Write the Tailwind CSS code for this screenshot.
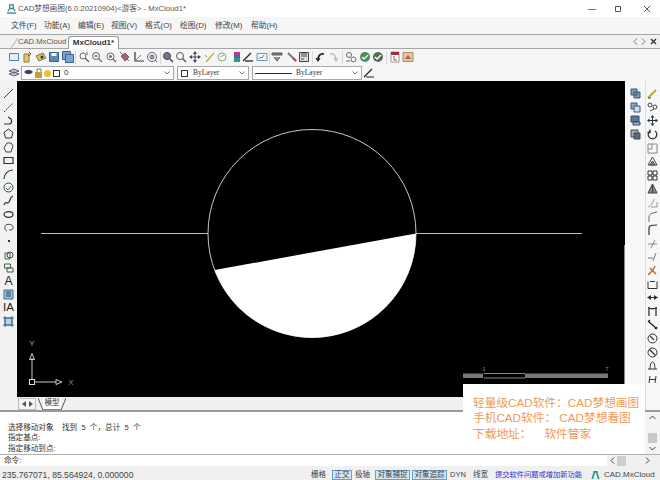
<!doctype html>
<html>
<head>
  <meta charset="UTF-8">
  <script src="https://cdn.jsdelivr.net/npm/@tailwindcss/browser@4"></script>
</head>
<body class="m-0">
<div class="relative w-[660px] h-[480px] overflow-hidden flex flex-col bg-[#f0f0f0] text-[#333] text-[8px] leading-none font-['Liberation_Sans','Noto_Sans_CJK_SC',sans-serif]">

  <!-- Title bar -->
  <div class="h-[17px] bg-white flex items-center shrink-0">
    <svg class="w-[11px] h-[11px] ml-[6px]" viewBox="0 0 12 12" fill="none"><path d="M4 2h4v4H4zM2 9l2-3h4l2 3" stroke="#2f8f7f" stroke-width="1.4"/><path d="M1 11h10" stroke="#3a6fb0" stroke-width="1.4"/></svg>
    <span class="ml-[1px] text-[7.7px] text-[#555]">CAD梦想画图(6.0.20210904)&lt;游客&gt; - MxCloud1*</span>
    <div class="ml-auto flex items-center">
      <svg class="w-[8px] h-[8px]" viewBox="0 0 8 8"><path d="M0 4.500h8" stroke="#777"/></svg>
      <svg class="w-[8px] h-[8px] ml-[18px]" viewBox="0 0 8 8" fill="none"><path d="M1.500 1.500h5v5h-5z" stroke="#555"/></svg>
      <svg class="w-[8px] h-[8px] ml-[21px] mr-[9px]" viewBox="0 0 8 8" fill="none"><path d="M1 1l6 6M7 1l-6 6" stroke="#555"/></svg>
    </div>
  </div>

  <!-- Menu bar -->
  <div class="h-[17px] bg-[#f6f6f6] flex items-center shrink-0 text-[7.8px] text-[#444]">
    <span class="ml-[11px] w-[33px]">文件(F)</span>
    <span class="w-[34px]">功能(A)</span>
    <span class="w-[33px]">编辑(E)</span>
    <span class="w-[34px]">视图(V)</span>
    <span class="w-[35px]">格式(O)</span>
    <span class="w-[35px]">绘图(D)</span>
    <span class="w-[36px]">修改(M)</span>
    <span>帮助(H)</span>
  </div>

  <!-- Document tabs -->
  <div class="h-[15px] bg-[#f1f1f1] border-t border-b border-[#a6a6a6] flex items-end shrink-0 relative">
    <svg class="w-[7px] h-[12px] ml-[11px]" viewBox="0 0 7 12" fill="none"><path d="M0 12L7 2" stroke="#aaa"/></svg>
    <span class="w-[50px] h-[13px] flex items-center text-[#555] text-[7.6px] whitespace-nowrap">CAD.MxCloud</span>
    <div class="h-[13px] w-[51px] bg-white border border-b-0 border-[#999] rounded-t-[3px] flex items-center justify-center font-bold text-[#333] text-[8px] -mb-[1px]">MxCloud1*</div>
    <div class="ml-auto h-[13px] flex items-center gap-[3px] mr-[3px]">
      <svg class="w-[5px] h-[7px]" viewBox="0 0 5 7" fill="none"><path d="M4 .5L1 3.500l3 3" stroke="#777"/></svg>
      <svg class="w-[5px] h-[7px]" viewBox="0 0 5 7" fill="none"><path d="M1 .5l3 3-3 3" stroke="#777"/></svg>
      <svg class="w-[7px] h-[7px] ml-[1px]" viewBox="0 0 7 7" fill="none"><path d="M1 1l5 5M6 1L1 6" stroke="#333" stroke-width="1.3"/></svg>
    </div>
  </div>

  <!-- Standard toolbar -->
  <div class="h-[16px] bg-[#f5f5f5] flex items-center shrink-0 pl-[8px]">
    <svg class="w-[12px] h-[12px] shrink-0" viewBox="0 0 12 12" fill="#e3eef8" stroke="#4a7fb0"><path d="M1.500 2.500h9v7h-9z"/></svg>
    <svg class="w-[12px] h-[12px] shrink-0 ml-[1px]" viewBox="0 0 12 12" fill="#e8c860" stroke="#8a7a40"><path d="M3 3h5v8H3z"/><path d="M8 1l2 2-3 2" fill="none" stroke="#555"/></svg>
    <svg class="w-[12px] h-[12px] shrink-0 ml-[2px]" viewBox="0 0 12 12" fill="#e5c050" stroke="#777"><path d="M1 5l7-3 3 5-7 3z"/><circle cx="7" cy="6" r="1.500" fill="#333" stroke="none"/></svg>
    <svg class="w-[12px] h-[12px] shrink-0 ml-[1px]" viewBox="0 0 12 12" fill="#5b86bd" stroke="#3c5f8c"><path d="M1.500 1.500h9v9h-9z"/><path d="M3.500 2h5v3h-5z" fill="#fff" stroke="none"/></svg>
    <svg class="w-[12px] h-[12px] shrink-0 ml-[2px]" viewBox="0 0 12 12" fill="#7ba3d6" stroke="#3c5f8c"><path d="M.5.500h8v8h-8z"/><path d="M3.500 3.500h8v8h-8z"/></svg>
    <div class="w-[1px] h-[13px] bg-[#d8d8d8] ml-[1px]"></div>
    <svg class="w-[12px] h-[12px] shrink-0 ml-[2px]" viewBox="0 0 12 12" fill="none" stroke="#667"><circle cx="5" cy="5" r="3"/><path d="M7 7l4 4" stroke-width="1.500"/><path d="M9 1v3" stroke="#a44"/></svg>
    <svg class="w-[12px] h-[12px] shrink-0 ml-[1px]" viewBox="0 0 12 12" fill="none" stroke="#667"><circle cx="5" cy="5" r="3.500"/><path d="M7.500 7.500l3.500 3.500M3.500 5h3" stroke-width="1.300"/></svg>
    <svg class="w-[12px] h-[12px] shrink-0 ml-[2px]" viewBox="0 0 12 12" fill="none" stroke="#667"><circle cx="5.500" cy="5.500" r="3.500"/><path d="M8 8l3 3M4 5.500h3M5.500 4v3" stroke-width="1.300"/></svg>
    <svg class="w-[12px] h-[12px] shrink-0 ml-[2px]" viewBox="0 0 12 12" fill="#a95f78" stroke="#666"><path d="M2 5l4-3 4 4-4 4z"/><path d="M1 1l3 3M10 10l-2-2" fill="none"/></svg>
    <svg class="w-[12px] h-[12px] shrink-0 ml-[2px]" viewBox="0 0 12 12" fill="none" stroke="#334"><path d="M2 1v9h9" stroke-width="1.200"/><path d="M2 10l6-6" stroke="#4a8fb0"/></svg>
    <svg class="w-[12px] h-[12px] shrink-0 ml-[1px]" viewBox="0 0 12 12" fill="none" stroke="#667"><circle cx="6" cy="6" r="4.500"/><circle cx="6" cy="6" r="2" fill="#8ab"/><path d="M9 9l2 2"/></svg>
    <div class="w-[1px] h-[13px] bg-[#d8d8d8] ml-[2px]"></div>
    <svg class="w-[12px] h-[12px] shrink-0 ml-[1px]" viewBox="0 0 12 12" fill="#778" stroke="#445"><circle cx="5" cy="5" r="3.500"/><path d="M7.500 7.500l3.500 3.500" stroke-width="1.500"/></svg>
    <svg class="w-[12px] h-[12px] shrink-0 ml-[1px]" viewBox="0 0 12 12" fill="none" stroke="#556"><circle cx="5" cy="5" r="3.500"/><path d="M7.500 7.500l3.500 3.500" stroke-width="1.500"/></svg>
    <svg class="w-[12px] h-[12px] shrink-0 ml-[2px]" viewBox="0 0 12 12" fill="#445"><path d="M6 0l2 3H4zM6 12l2-3H4zM0 6l3-2v4zM12 6L9 4v4z"/><path d="M5.500 2h1v8h-1zM2 5.500h8v1H2z"/></svg>
    <svg class="w-[12px] h-[12px] shrink-0 ml-[3px]" viewBox="0 0 12 12" fill="none"><path d="M2 11l8-9" stroke="#c8b040" stroke-width="1.500"/><path d="M1 4l2 2" stroke="#888"/></svg>
    <svg class="w-[12px] h-[12px] shrink-0" viewBox="0 0 12 12" fill="none" stroke="#8aa88a"><circle cx="6" cy="6" r="4"/><path d="M4 6l4-2"/></svg>
    <svg class="w-[12px] h-[12px] shrink-0 ml-[3px]" viewBox="0 0 12 12"><path d="M3 1h6v3H3z" fill="#c03a8a"/><path d="M3 4h6v3H3z" fill="#3a6ac0"/><path d="M3 7h6v4H3z" fill="#2a9a7a"/></svg>
    <svg class="w-[12px] h-[12px] shrink-0 -ml-[1px]" viewBox="0 0 12 12" fill="none" stroke="#222"><path d="M1 10L9 2" stroke-width="1.300"/><path d="M3 10h8" stroke-width="1.300"/></svg>
    <svg class="w-[12px] h-[12px] shrink-0 ml-[2px]" viewBox="0 0 12 12" fill="#eef5fb" stroke="#6b96b8"><path d="M1 2.500h10v7H1z"/><path d="M3 8l2-2 1 1 2-3" fill="none"/></svg>
    <div class="w-[1px] h-[13px] bg-[#d8d8d8] ml-[1px]"></div>
    <svg class="w-[12px] h-[12px] shrink-0 ml-[1px]" viewBox="0 0 12 12" fill="#888" stroke="#555"><path d="M1 2h10v2H1z"/><path d="M3 6l3 4 3-4" fill="#c08a70"/></svg>
    <svg class="w-[12px] h-[12px] shrink-0 ml-[3px]" viewBox="0 0 12 12" fill="none"><path d="M2 2l8 8" stroke="#777" stroke-width="2"/><path d="M7 7l3 3" stroke="#b05050" stroke-width="2"/></svg>
    <svg class="w-[12px] h-[12px] shrink-0" viewBox="0 0 12 12" fill="#ddd" stroke="#444"><path d="M1.500 1.500h9v9h-9z"/><path d="M3 3h6M3 5h6M3 8h3"/></svg>
    <div class="w-[1px] h-[13px] bg-[#d8d8d8] ml-[2px]"></div>
    <svg class="w-[12px] h-[12px] shrink-0 ml-[2px]" viewBox="0 0 12 12" fill="none" stroke="#222" stroke-width="1.800"><path d="M9 3C5 2 3 5 3 9"/><path d="M1 7l2 3 2-3" stroke-width="1.200"/></svg>
    <svg class="w-[12px] h-[12px] shrink-0" viewBox="0 0 12 12" fill="none" stroke="#bbb" stroke-width="1.500"><path d="M3 3c4-1 6 2 6 6"/><path d="M7 7l2 3 2-3" stroke-width="1.200"/></svg>
    <div class="w-[1px] h-[13px] bg-[#d8d8d8] ml-[3px]"></div>
    <svg class="w-[12px] h-[12px] shrink-0 ml-[2px]" viewBox="0 0 12 12" fill="none" stroke="#667"><circle cx="4" cy="4" r="2.500"/><circle cx="8.500" cy="8.500" r="2.500"/><path d="M1 10h4"/></svg>
    <svg class="w-[12px] h-[12px] shrink-0 ml-[2px]" viewBox="0 0 12 12"><circle cx="6" cy="6" r="5" fill="#4f8a5a"/><path d="M3 6l2 2 4-4" fill="none" stroke="#dfe" stroke-width="1.400"/></svg>
    <svg class="w-[12px] h-[12px] shrink-0 ml-[1px]" viewBox="0 0 12 12"><circle cx="6" cy="6" r="5" fill="#5a6a58"/><path d="M3 6l2 2 4-4" fill="none" stroke="#fff" stroke-width="1.400"/></svg>
    <div class="w-[1px] h-[13px] bg-[#d8d8d8] ml-[2px]"></div>
    <svg class="w-[12px] h-[12px] shrink-0 ml-[2px]" viewBox="0 0 12 12" fill="#fff" stroke="#999"><path d="M2 1h8v10H2z"/><path d="M2 1h8v3H2z" fill="#a03040" stroke="none"/><path d="M5 5v4h3" fill="none" stroke="#b04050"/></svg>
    <svg class="w-[12px] h-[12px] shrink-0 ml-[1px]" viewBox="0 0 12 12" fill="#e0c8a0" stroke="#a09060"><path d="M1 1.500h10v9H1z"/><path d="M3 8l3-4 3 4z" fill="#b05a4a" stroke="none"/></svg>
  </div>

  <!-- Layer / property toolbar -->
  <div class="h-[16px] bg-[#f5f5f5] flex items-center shrink-0 pl-[8px] text-[8px]">
    <svg class="w-[12px] h-[12px] shrink-0" viewBox="0 0 12 12" fill="#b8c8d8" stroke="#667"><path d="M1 4l5-2 5 2-5 2zM1 7l5-2 5 2-5 2z"/></svg>
    <div class="w-[153px] h-[14px] ml-[1px] bg-white border border-[#a8a8a8] flex items-center">
      <svg class="w-[10px] h-[8px] ml-[2px]" viewBox="0 0 10 8"><path d="M0 3c3-3 6-3 9 0-3 3-6 3-9 0z" fill="#445"/></svg>
      <svg class="w-[9px] h-[10px]" viewBox="0 0 9 10"><path d="M1 4h7v6H1z" fill="#c9a030"/><path d="M3 4V1h4v3" fill="none" stroke="#777"/></svg>
      <svg class="w-[9px] h-[9px]" viewBox="0 0 9 9"><circle cx="4.500" cy="4.500" r="3.500" fill="#f0c030"/></svg>
      <div class="w-[7px] h-[7px] border border-[#333] ml-[1px] bg-white"></div>
      <span class="ml-[4px] text-[8px]">0</span>
      <svg class="w-[6px] h-[4px] ml-auto mr-[3px]" viewBox="0 0 6 4" fill="none"><path d="M.5.500L3 3 5.500.5" stroke="#777"/></svg>
    </div>
    <div class="w-[72px] h-[14px] ml-[3px] bg-white border border-[#a8a8a8] flex items-center">
      <div class="w-[7px] h-[7px] border border-[#333] ml-[3px] bg-white"></div>
      <span class="ml-[5px] font-['Liberation_Serif',serif] text-[7.5px]">ByLayer</span>
      <svg class="w-[6px] h-[4px] ml-auto mr-[3px]" viewBox="0 0 6 4" fill="none"><path d="M.5.500L3 3 5.500.5" stroke="#777"/></svg>
    </div>
    <div class="w-[110px] h-[14px] ml-[3px] bg-white border border-[#a8a8a8] flex items-center">
      <div class="w-[37px] h-[1px] bg-[#333] ml-[2px]"></div>
      <span class="ml-[4px] font-['Liberation_Serif',serif] text-[7.5px]">ByLayer</span>
      <svg class="w-[6px] h-[4px] ml-auto mr-[3px]" viewBox="0 0 6 4" fill="none"><path d="M.5.500L3 3 5.500.5" stroke="#777"/></svg>
    </div>
    <svg class="w-[12px] h-[12px] shrink-0 ml-[1px]" viewBox="0 0 12 12" fill="none" stroke="#222" stroke-width="1.200"><path d="M1 10L9 2M3 10h8"/></svg>
  </div>

  <!-- Work area -->
  <div class="flex flex-1 min-h-0">
    <!-- Draw toolbar -->
    <div class="w-[17px] shrink-0 bg-[#f2f2f2] flex flex-col items-center pt-[6px] text-[#222]">
      <div class="h-[13.4px] flex items-center"><svg class="w-[11px] h-[11px]" viewBox="0 0 11 11" fill="none" stroke="#444"><path d="M1 10L10 1"/></svg></div>
      <div class="h-[13.4px] flex items-center"><svg class="w-[11px] h-[11px]" viewBox="0 0 11 11" fill="none" stroke="#444" stroke-dasharray="2 1"><path d="M1 10L10 1"/></svg></div>
      <div class="h-[13.4px] flex items-center"><svg class="w-[11px] h-[11px]" viewBox="0 0 11 11" fill="none" stroke="#333" stroke-width="1.200"><path d="M1 9h5c3 0 3-3 2-5L5 2"/></svg></div>
      <div class="h-[13.4px] flex items-center"><svg class="w-[11px] h-[11px]" viewBox="0 0 11 11" fill="none" stroke="#333"><path d="M5.500 1L10 4.500 8.500 10h-6L1 4.500z"/></svg></div>
      <div class="h-[13.4px] flex items-center"><svg class="w-[11px] h-[11px]" viewBox="0 0 11 11" fill="none" stroke="#444"><path d="M4 1h4l2 3-2 6H3L1 6z"/></svg></div>
      <div class="h-[13.4px] flex items-center"><svg class="w-[11px] h-[11px]" viewBox="0 0 11 11" fill="none" stroke="#333" stroke-width="1.200"><path d="M1 2.500h9v6H1z"/></svg></div>
      <div class="h-[13.4px] flex items-center"><svg class="w-[11px] h-[11px]" viewBox="0 0 11 11" fill="none" stroke="#333" stroke-width="1.200"><path d="M1 10C1 5 5 1 10 1"/></svg></div>
      <div class="h-[13.4px] flex items-center"><svg class="w-[11px] h-[11px]" viewBox="0 0 11 11" fill="none" stroke="#3a4a3a"><circle cx="5.500" cy="5.500" r="4.500"/><path d="M3 6l2 2 3-4" stroke="#4a7a4a"/></svg></div>
      <div class="h-[13.4px] flex items-center"><svg class="w-[11px] h-[11px]" viewBox="0 0 11 11" fill="none" stroke="#333" stroke-width="1.200"><path d="M1 10c2-5 3 0 5-3s1-5 4-6"/></svg></div>
      <div class="h-[13.4px] flex items-center"><svg class="w-[11px] h-[11px]" viewBox="0 0 11 11" fill="none" stroke="#333" stroke-width="1.200"><ellipse cx="5.500" cy="5.500" rx="4.500" ry="2.800"/></svg></div>
      <div class="h-[13.4px] flex items-center"><svg class="w-[11px] h-[11px]" viewBox="0 0 11 11" fill="none" stroke="#444"><path d="M4 9C1 8 1 3 4 2.500s6 0 6 3-3 3-4 2"/></svg></div>
      <div class="h-[13.4px] flex items-center"><div class="w-[2px] h-[2px] bg-[#333]"></div></div>
      <div class="h-[13.4px] flex items-center"><svg class="w-[11px] h-[11px]" viewBox="0 0 11 11" fill="none" stroke="#3f6f4a"><path d="M2 4h5v6H2z"/><circle cx="7" cy="6" r="3" stroke="#444"/></svg></div>
      <div class="h-[13.4px] flex items-center"><svg class="w-[11px] h-[11px]" viewBox="0 0 11 11" fill="none" stroke="#3f5f4a"><path d="M1.500 2h6v4h-6z"/><path d="M4 6h6v4H4z"/></svg></div>
      <div class="h-[13.4px] flex items-center text-[12px]">A</div>
      <div class="h-[13.4px] flex items-center"><svg class="w-[11px] h-[11px]" viewBox="0 0 11 11" fill="#9cc0dc" stroke="#3f6f8f"><path d="M1 1h9v9H1z"/><path d="M3 3h5M3 5h5M3 7h5" stroke="#345"/></svg></div>
      <div class="h-[13.4px] flex items-center text-[11.5px]">IA</div>
      <div class="h-[13.4px] flex items-center"><svg class="w-[11px] h-[11px]" viewBox="0 0 11 11" fill="#bcd6e6" stroke="#3a6f8f"><path d="M2 2h7v7H2z"/><path d="M0 2h11M0 9h11M2 0v11M9 0v11" fill="none"/></svg></div>
    </div>

    <div class="flex-1 min-w-0 flex flex-col">
      <!-- Drawing canvas -->
      <svg class="w-[608px] h-[316px] bg-black block" viewBox="17 81 608 316">
        <path d="M41 233.500H208M416 233.500H582" stroke="#bdbdbd" fill="none"/>
        <circle cx="312" cy="233.500" r="104" fill="none" stroke="#dcdcdc" stroke-width="0.900"/>
        <path d="M214.600 270.100L416 233.500A104 104 0 0 1 214.600 270.100Z" fill="#fff"/>
        <path d="M624.500 245V397" stroke="#888"/>
        <path d="M32 379V358M35 382H56" stroke="#ccc"/>
        <path d="M32 353.500l-2.500 6h5zM62 382l-6-2.500v5z" fill="none" stroke="#ccc"/>
        <rect x="29.500" y="379.500" width="5" height="5" fill="none" stroke="#ddd"/>
        <text x="32" y="346" fill="#aaa" font-size="8" text-anchor="middle" font-family="Liberation Sans">Y</text>
        <text x="71" y="385" fill="#888" font-size="8" text-anchor="middle" font-family="Liberation Sans">X</text>
        <path d="M463 373.500h20v4.500h-20zM525 373.500h83v4.500h-83z" fill="#777"/>
        <path d="M484 373.500h41M484 378h41" stroke="#888"/>
        <text x="484" y="371" fill="#888" font-size="6" text-anchor="middle" font-family="Liberation Sans">1</text>
        <text x="607" y="371" fill="#888" font-size="6" text-anchor="middle" font-family="Liberation Sans">7</text>
      </svg>
      <!-- Layout tabs -->
      <div class="h-[13px] flex items-center text-[7.6px] pl-[1px]">
        <div class="w-[18px] h-[12px] border border-[#bbb] bg-[#f4f4f4] flex items-center justify-center gap-[3px]">
          <svg class="w-[4px] h-[6px]" viewBox="0 0 4 6"><path d="M4 0L0 3l4 3z" fill="#555"/></svg>
          <svg class="w-[4px] h-[6px]" viewBox="0 0 4 6"><path d="M0 0l4 3-4 3z" fill="#555"/></svg>
        </div>
        <svg class="w-[5px] h-[12px] ml-[2px]" viewBox="0 0 5 12" fill="none"><path d="M0 0l5 12" stroke="#555"/></svg>
        <span class="w-[18px] h-[12px] flex items-center justify-center bg-white border-b border-[#888]">模型</span>
        <svg class="w-[5px] h-[12px]" viewBox="0 0 5 12" fill="none"><path d="M5 0L0 12" stroke="#555"/></svg>
      </div>
    </div>

    <!-- Modify toolbars -->
    <div class="w-[35px] shrink-0 bg-[#f7f7f7] flex">
      <div class="w-[20px] flex flex-col items-center pt-[6px]">
        <div class="h-[13.6px] flex items-center"><svg class="w-[11px] h-[11px]" viewBox="0 0 11 11" fill="#7f99b8" stroke="#3c5a78"><path d="M1 1h6v6H1zM4 4h6v6H4z"/></svg></div>
        <div class="h-[13.6px] flex items-center"><svg class="w-[11px] h-[11px]" viewBox="0 0 11 11" fill="#8aa8c8" stroke="#3c5a78"><path d="M1 1h6v6H1z"/><path d="M4 4h6v6H4z" fill="#cde"/></svg></div>
        <div class="h-[13.6px] flex items-center"><svg class="w-[11px] h-[11px]" viewBox="0 0 11 11" fill="#5c7898" stroke="#2f4a68"><path d="M1 1h8v6H1z"/><path d="M3 7h7v3H3z" fill="#aac"/></svg></div>
        <div class="h-[13.6px] flex items-center"><svg class="w-[11px] h-[11px]" viewBox="0 0 11 11" fill="#9db0c4" stroke="#3c4a58"><path d="M1 1h7v7H1z"/><path d="M4 4h6v6H4z" fill="#667"/></svg></div>
      </div>
      <div class="w-[13px] border-l border-[#ddd] flex flex-col items-center pt-[6px]">
        <div class="h-[13.6px] flex items-center"><svg class="w-[11px] h-[11px]" viewBox="0 0 11 11" fill="none"><path d="M1 10L9 2" stroke="#b8a840" stroke-width="2"/><path d="M1 10h3" stroke="#555"/></svg></div>
        <div class="h-[13.6px] flex items-center"><svg class="w-[11px] h-[11px]" viewBox="0 0 11 11" fill="none" stroke="#444"><circle cx="3" cy="3" r="2"/><circle cx="8" cy="5" r="2"/><path d="M3 9l4-2"/></svg></div>
        <div class="h-[13.6px] flex items-center"><svg class="w-[11px] h-[11px]" viewBox="0 0 11 11" fill="#234"><path d="M5.500 0l2 2.500h-4zM5.500 11l2-2.500h-4zM0 5.500l2.500-2v4zM11 5.500l-2.500-2v4z"/><path d="M5 2h1v7H5zM2 5h7v1H2z"/></svg></div>
        <div class="h-[13.6px] flex items-center"><svg class="w-[11px] h-[11px]" viewBox="0 0 11 11" fill="none" stroke="#333" stroke-width="1.300"><path d="M3 2a4.300 4.300 0 1 0 5 0"/><path d="M3 .5v3h-2.500"/></svg></div>
        <div class="h-[13.6px] flex items-center"><svg class="w-[11px] h-[11px]" viewBox="0 0 11 11" fill="none" stroke="#888"><path d="M1 1h9v9H1z"/><path d="M1 6h4V1"/></svg></div>
        <div class="h-[13.6px] flex items-center"><svg class="w-[11px] h-[11px]" viewBox="0 0 11 11" fill="none" stroke="#444"><path d="M5.500 1L10 9H1z"/><path d="M5.500 5L8 9H3z" fill="#888"/></svg></div>
        <div class="h-[13.6px] flex items-center"><svg class="w-[11px] h-[11px]" viewBox="0 0 11 11" fill="none" stroke="#333"><path d="M1 1h4v4H1zM6 1h4v4H6zM1 6h4v4H1zM6 6h4v4H6z"/></svg></div>
        <div class="h-[13.6px] flex items-center"><svg class="w-[11px] h-[11px]" viewBox="0 0 11 11" fill="#888" stroke="#444"><path d="M5.500 1L1 10h4.500zM5.500 1L10 10H5.500z"/></svg></div>
        <div class="h-[13.6px] flex items-center"><svg class="w-[11px] h-[11px]" viewBox="0 0 11 11" fill="none" stroke="#999"><path d="M1 10c3-1 5-4 6-8M4 10h6V5"/></svg></div>
        <div class="h-[13.6px] flex items-center"><svg class="w-[11px] h-[11px]" viewBox="0 0 11 11" fill="none" stroke="#666"><path d="M2 11V6c0-2 2-4 8-5"/></svg></div>
        <div class="h-[13.6px] flex items-center"><svg class="w-[11px] h-[11px]" viewBox="0 0 11 11" fill="none" stroke="#333" stroke-width="1.200"><path d="M2 11V4c0-2 1-3 8-3"/></svg></div>
        <div class="h-[13.6px] flex items-center"><svg class="w-[11px] h-[11px]" viewBox="0 0 11 11" fill="none" stroke="#888"><path d="M1 6h9M8 2L4 10"/></svg></div>
        <div class="h-[13.6px] flex items-center"><svg class="w-[11px] h-[11px]" viewBox="0 0 11 11" fill="none" stroke="#777"><path d="M1 7h5M9 2L6 10"/></svg></div>
        <div class="h-[13.6px] flex items-center"><svg class="w-[11px] h-[11px]" viewBox="0 0 11 11" fill="none" stroke="#b0703a" stroke-width="1.500"><path d="M1 10l5-5M3 3l6 6M8 1L6 5"/></svg></div>
        <div class="h-[13.6px] flex items-center"><svg class="w-[11px] h-[11px]" viewBox="0 0 11 11" fill="none" stroke="#333"><path d="M1 2.500v7h9v-7M3 2.500h5"/></svg></div>
        <div class="h-[13.6px] flex items-center"><svg class="w-[11px] h-[11px]" viewBox="0 0 11 11" fill="#333"><path d="M0 5.500L4 3v5zM11 5.500L7 3v5z"/><path d="M4 5h3v1H4z"/></svg></div>
        <div class="h-[13.6px] flex items-center"><svg class="w-[11px] h-[11px]" viewBox="0 0 11 11" fill="none" stroke="#333" stroke-width="1.300"><path d="M2 1v9M9 1v9M1 2c3 1 6 1 9 0"/></svg></div>
        <div class="h-[13.6px] flex items-center"><svg class="w-[11px] h-[11px]" viewBox="0 0 11 11" fill="none" stroke="#222" stroke-width="1.300"><path d="M1 2l9 8M1 3l2-2M8 10l2-2"/></svg></div>
        <div class="h-[13.6px] flex items-center"><svg class="w-[11px] h-[11px]" viewBox="0 0 11 11" fill="none" stroke="#333"><circle cx="5.500" cy="5.500" r="4.500"/><path d="M3 3l4 4" stroke-width="1.300"/></svg></div>
        <div class="h-[13.6px] flex items-center"><svg class="w-[11px] h-[11px]" viewBox="0 0 11 11" fill="none" stroke="#333"><circle cx="5.500" cy="5.500" r="4.500"/><path d="M2.500 2.500l6 6" stroke-width="1.300"/></svg></div>
        <div class="h-[13.6px] flex items-center"><svg class="w-[11px] h-[11px]" viewBox="0 0 11 11" fill="none" stroke="#333"><path d="M1 9h9M3 9c0-4 1-7 2.500-7S8 5 8 9"/></svg></div>
        <div class="h-[13.6px] flex items-center"><svg class="w-[11px] h-[11px]" viewBox="0 0 11 11" fill="none" stroke="#333"><path d="M3 2L2 9M9 2L8 9M3 5.500h5"/></svg></div>
      </div>
    </div>
  </div>

  <!-- Command window -->
  <div class="h-[44px] shrink-0 bg-white border-t-2 border-[#9a9a9a] flex flex-col justify-end pl-[8px] text-[7.6px] text-[#333] leading-[10.5px] whitespace-nowrap">
    <div>选择移动对象&nbsp;&nbsp;&nbsp;&nbsp;找到&nbsp;&nbsp;5&nbsp;&nbsp;个，总计&nbsp;&nbsp;5&nbsp;&nbsp;个</div>
    <div>指定基点:</div>
    <div>指定移动到点:</div>
  </div>
  <div class="h-[12px] shrink-0 bg-white border-t border-[#b0b0b0] flex items-center pl-[4px] text-[7.6px] relative">
    命令:
    <div class="absolute left-[607px] top-0 w-[53px] h-[11px] bg-[#f0f0f0] flex items-center">
      <svg class="w-[5px] h-[7px] ml-[3px]" viewBox="0 0 5 7" fill="none"><path d="M4 .5L1 3.500l3 3" stroke="#444"/></svg>
      <div class="w-[9px] h-[10px] bg-[#cdcdcd] ml-[2px]"></div>
      <svg class="w-[5px] h-[7px] ml-[19px]" viewBox="0 0 5 7" fill="none"><path d="M1 .5l3 3-3 3" stroke="#444"/></svg>
    </div>
  </div>

  <!-- Status bar -->
  <div class="h-[14px] shrink-0 bg-[#f0f0f0] pt-[4px] flex items-center text-[7.5px] text-[#444] whitespace-nowrap">
    <span class="ml-[2px] w-[309px] text-[8.6px]">235.767071, 85.564924, 0.000000</span>
    <span class="w-[21px]">栅格</span>
    <span class="w-[20px] h-[10px] flex items-center justify-center bg-[#d5e6f3] border border-[#6aa0c8]">正交</span>
    <span class="ml-[3px] w-[20px]">极轴</span>
    <span class="w-[35px] h-[10px] flex items-center justify-center bg-[#d5e6f3] border border-[#6aa0c8]">对象捕捉</span>
    <span class="ml-[2px] w-[35px] h-[10px] flex items-center justify-center bg-[#d5e6f3] border border-[#6aa0c8]">对象追踪</span>
    <span class="ml-[3px] w-[23px]">DYN</span>
    <span class="w-[22px]">线宽</span>
    <span class="w-[95px] text-[#3232c8] text-[7.25px]">提交软件问题或增加新功能</span>
    <svg class="w-[11px] h-[10px] shrink-0" viewBox="0 0 11 11" fill="#2f9a8a"><path d="M1 10l2-7h2L3 10zM6 3h2l2 7H8zM3 1h5v2H3z"/></svg>
    <span class="ml-[3px] text-[8px]">CAD.MxCloud</span>
  </div>

  <!-- Promo overlay -->
  <div class="absolute left-[463px] top-[384px] w-[182px] h-[66px] bg-white pl-[10px] pt-[11px] text-[11.7px] leading-[15.3px] text-[#ef9a5a] whitespace-pre">轻量级CAD软件：CAD梦想画图
手机CAD软件： CAD梦想看图
下载地址：    软件管家</div>

  <!-- Command window scrollbar -->
  <div class="absolute left-[645px] top-[412px] w-[15px] h-[42px] bg-[#f4f4f4] flex flex-col items-center justify-between py-[3px]">
    <svg class="w-[7px] h-[5px]" viewBox="0 0 7 5" fill="none"><path d="M.5 4L3.500 1l3 3" stroke="#444"/></svg>
    <div class="w-[9px] h-[10px] bg-[#c8c8c8] mt-[10px]"></div>
    <svg class="w-[7px] h-[5px]" viewBox="0 0 7 5" fill="none"><path d="M.5 1l3 3 3-3" stroke="#444"/></svg>
  </div>
</div>
</body>
</html>
